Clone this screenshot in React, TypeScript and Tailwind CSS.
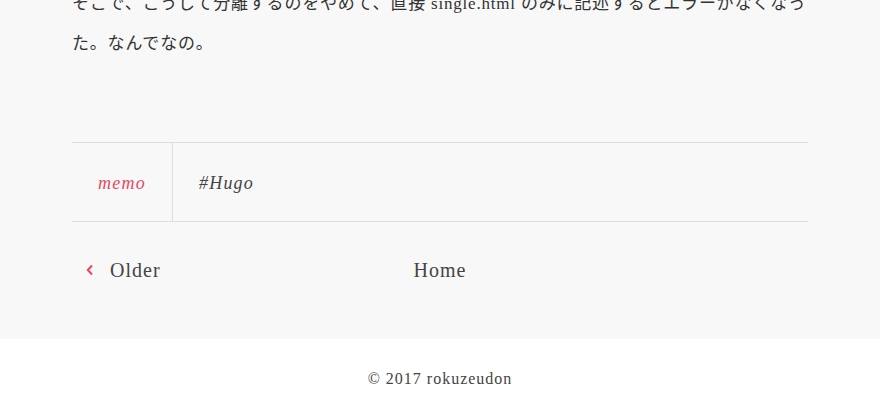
import React from 'react';

const serif = "font-['Liberation_Serif','Noto_Sans_CJK_JP',serif]";

export default function App() {
  return (
    <div className={`min-h-[415px] w-[880px] overflow-hidden bg-white ${serif}`}>
      {/* Article tail */}
      <div className="flex h-[339px] flex-col bg-[#f8f8f8]">
        <div className="mx-[72px] flex w-[736px] flex-col">
          <p className="mt-[-16px] text-[17px] leading-[40px] text-[#333] tracking-[0.8px] whitespace-nowrap">
            そこで、こうして分離するのをやめて、直接 single.html のみに記述するとエラーがなくなっ
            <br />
            た。なんでなの。
          </p>

          {/* Tags */}
          <div className="mt-[78px] flex h-[80px] border-y border-[#dddddd]">
            <div className="flex w-[101px] items-center justify-center border-r border-[#dddddd] pt-[2px] text-[18px] italic tracking-[1.2px] text-[#e8475f]">
              memo
            </div>
            <div className="flex items-center pl-[26px] pt-[2px] text-[18px] italic tracking-[1.2px] text-[#444]">
              #Hugo
            </div>
          </div>

          {/* Pager */}
          <div className="grid grid-cols-3 items-center pt-[33px] text-[20px] tracking-[1px] text-[#444]">
            <div className="flex items-center pl-[13px]">
              <svg width="10" height="14" viewBox="0 0 10 14" className="mr-[15px]">
                <path d="M7 2.5 L2.8 7 L7 11.5" fill="none" stroke="#e8475f" strokeWidth="2" />
              </svg>
              <span>Older</span>
            </div>
            <div className="text-center">Home</div>
            <div />
          </div>
        </div>
      </div>

      {/* Footer */}
      <footer className="pt-[28px] text-center text-[16px] tracking-[1px] text-[#444]">
        © 2017 rokuzeudon
      </footer>
    </div>
  );
}
